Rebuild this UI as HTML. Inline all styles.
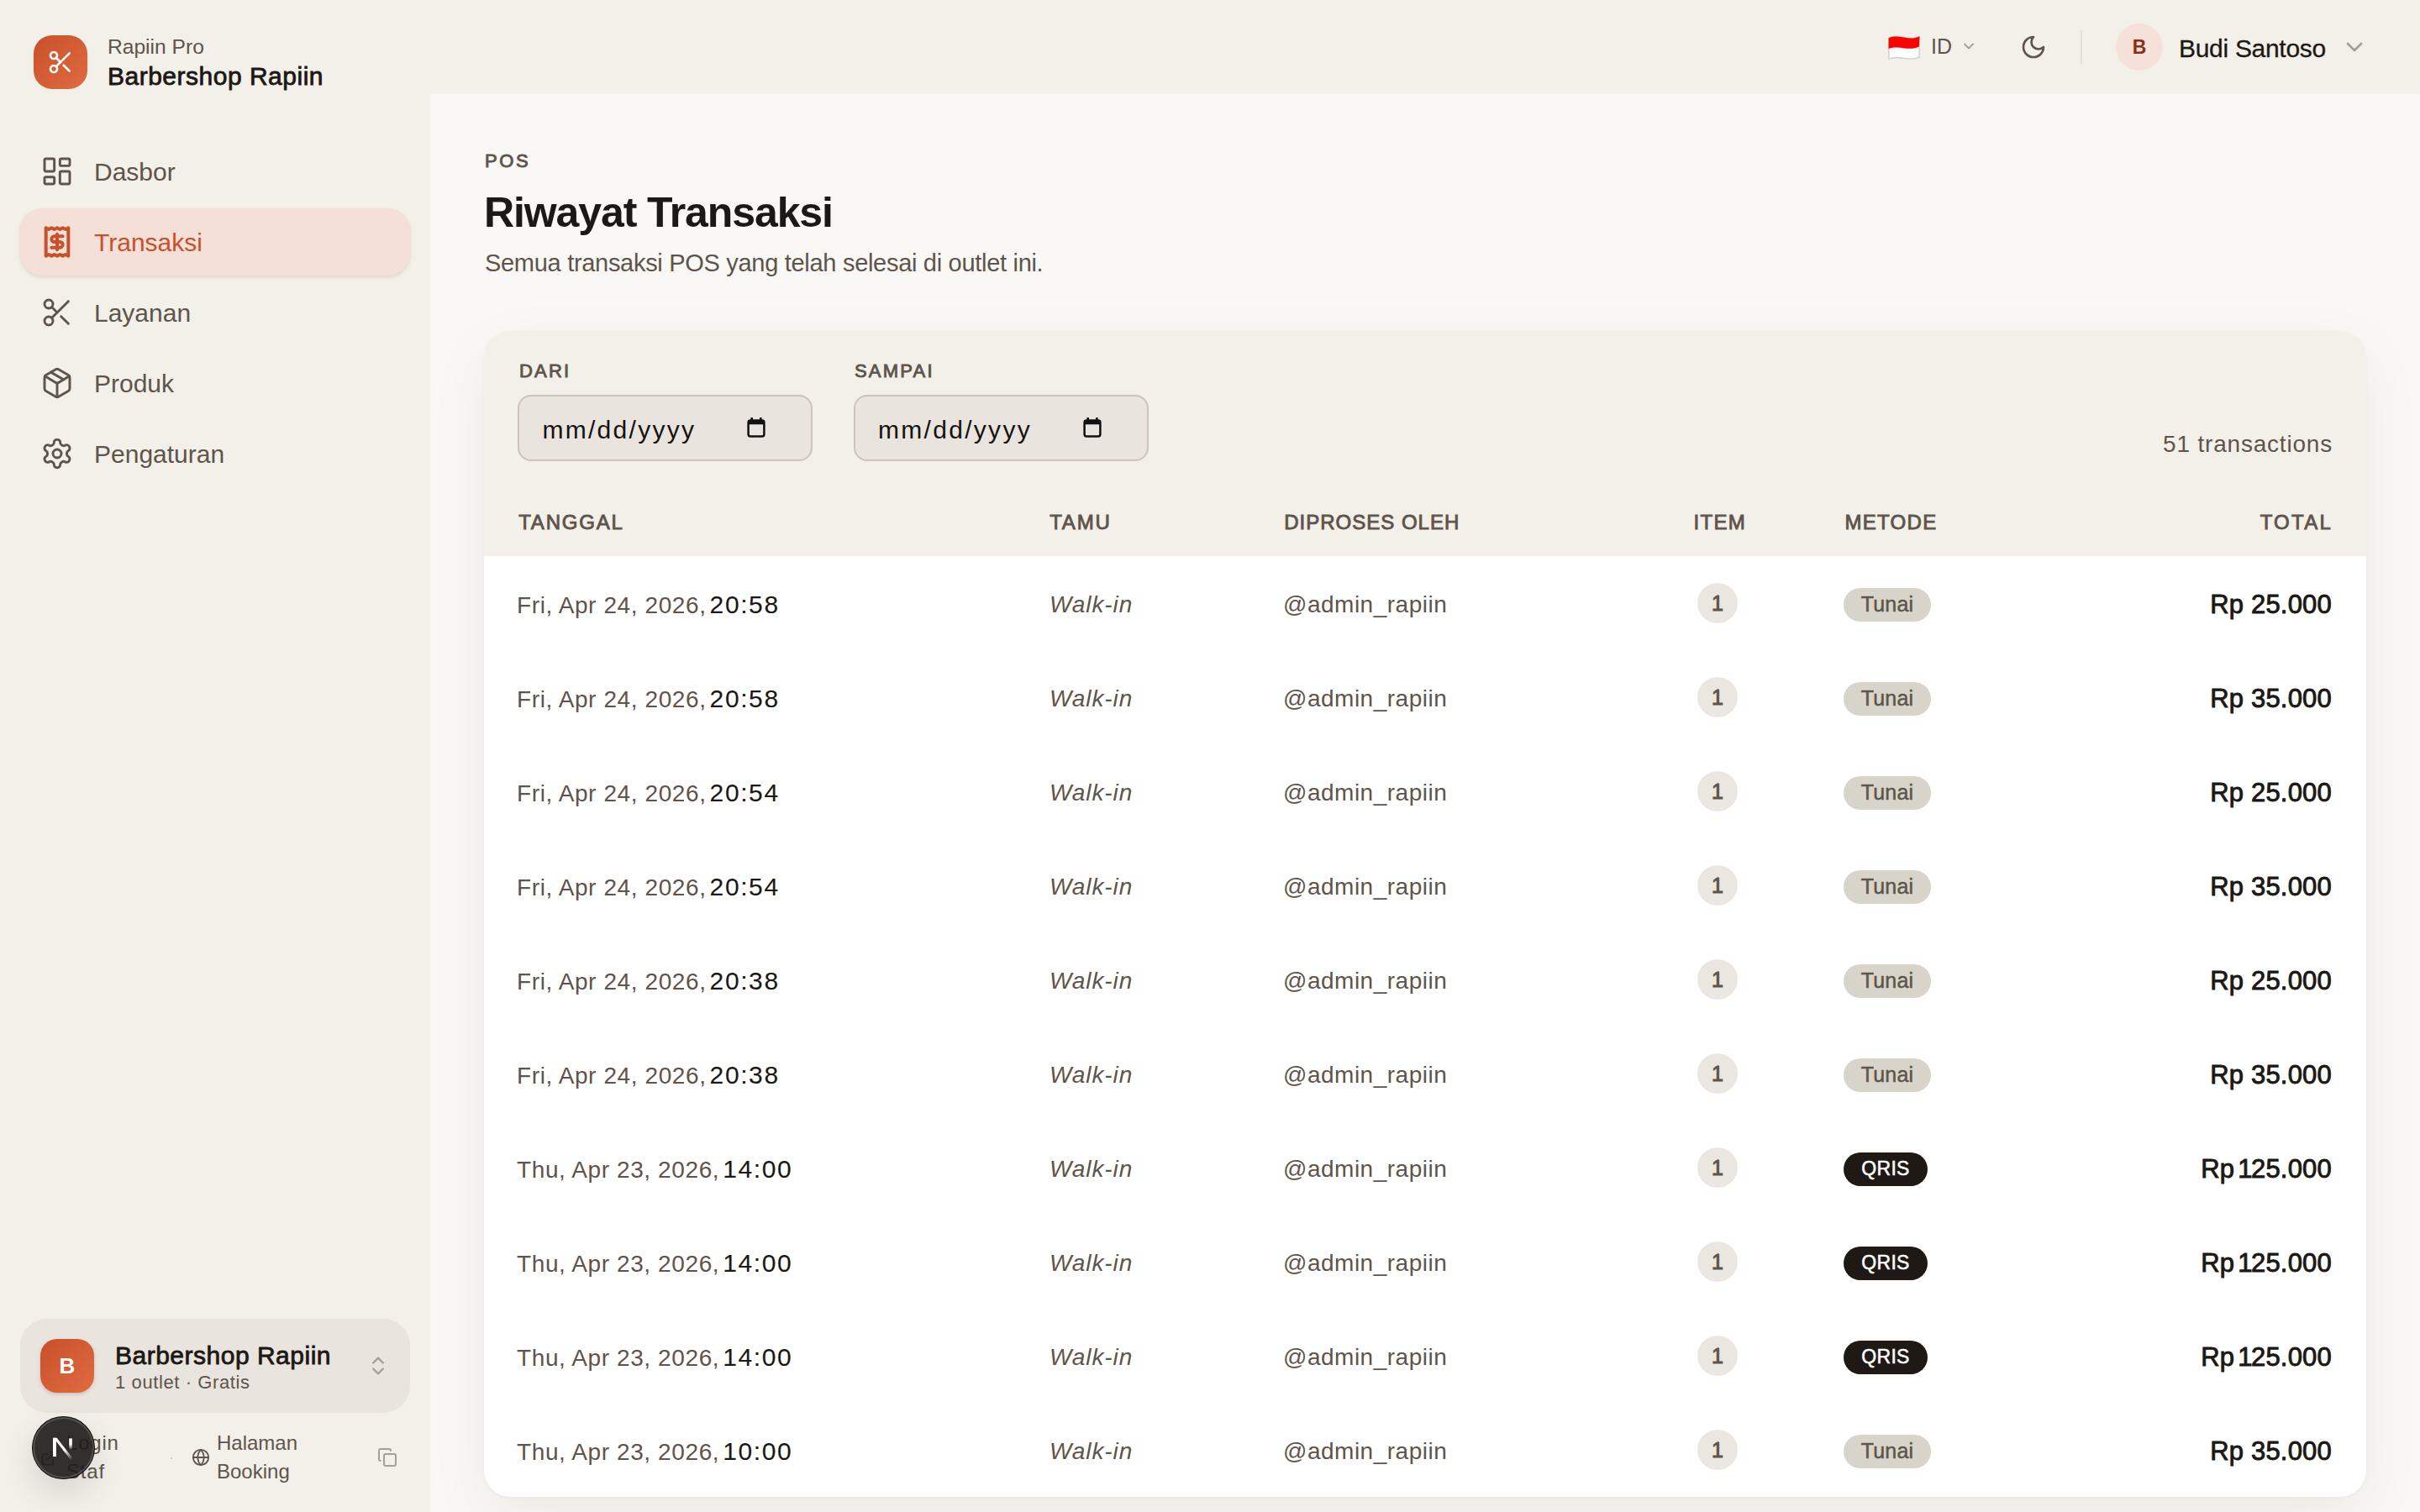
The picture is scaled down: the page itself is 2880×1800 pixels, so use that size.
<!DOCTYPE html>
<html><head><meta charset="utf-8">
<style>
*{box-sizing:border-box;margin:0;padding:0}
html,body{width:2880px;height:1800px;overflow:hidden;background:#f3f0ea}
body{font-family:"Liberation Sans",sans-serif;color:#1c1814}
#root{zoom:2;width:1440px;height:900px;position:relative;background:#f3f0ea;overflow:hidden}
.abs{position:absolute}
svg{display:block}
/* sidebar */
.logo{left:20px;top:21px;width:32px;height:32px;border-radius:11px;background:linear-gradient(135deg,#c8512b,#e06a40)}
.brand1{left:64px;top:21px;font-size:12.3px;color:#5e544b;white-space:nowrap}
.brand2{left:64px;top:36.8px;font-size:15px;letter-spacing:0.25px;font-weight:normal;color:#1c1814;white-space:nowrap;-webkit-text-stroke:0.4px #1c1814}
.nav{left:12px;width:232px;height:40px;border-radius:13px;color:#5e544b;font-size:15px}
.nav .ic{position:absolute;left:12px;top:10px;width:20px;height:20px}
.nav .tx{position:absolute;left:44px;top:12px;white-space:nowrap}
.nav.act{background:#f4e0d7;color:#c8512b;box-shadow:0 1px 2px rgba(90,60,40,.14)}
.main{left:256px;top:56px;width:1184px;height:844px;background:#f9f8f5;border-left:0.5px solid #fbfaf7;border-top:0.5px solid #fbfaf7}

/* topbar */
.flag{left:1123.5px;top:21.5px;width:19px;height:14px}
.lang{left:1149px;top:21.4px;font-size:12.5px;line-height:12.5px;color:#5e544b}
.chev1{left:1166.5px;top:22.5px;width:10px;height:10px}
.moon{left:1202px;top:20px;width:16px;height:16px}
.vdiv{left:1238px;top:18px;width:1px;height:20px;background:#e2ddd5}
.avatar{left:1259px;top:14px;width:28px;height:28px;border-radius:50%;background:#f5e1da;color:#8e2e12;font-weight:bold;font-size:11.5px;text-align:center;line-height:28px}
.uname{left:1296.5px;top:21.3px;font-size:15px;line-height:15px;color:#1c1814;letter-spacing:-0.15px;-webkit-text-stroke:0.15px #1c1814;white-space:nowrap}
.chev2{left:1393px;top:20px;width:16px;height:16px}
/* main header */
.eyebrow{left:288.5px;top:90.7px;font-size:11px;line-height:11px;font-weight:normal;letter-spacing:1.3px;color:#5e544b;-webkit-text-stroke:0.45px #5e544b}
.h1{left:288px;top:114px;font-size:25px;line-height:25px;font-weight:bold;color:#1c1814;letter-spacing:-0.55px;white-space:nowrap}
.sub{left:288.5px;top:148.8px;font-size:14.5px;line-height:15px;color:#5e544b;letter-spacing:-0.15px;white-space:nowrap}
/* card */
.card{left:288px;top:197px;width:1120px;height:694px;border-radius:16px;background:#f3f0ea;box-shadow:0 1px 2px rgba(80,60,40,.03),0 12px 36px -2px rgba(80,60,40,.08)}
.lbl{top:215.7px;font-size:11px;line-height:11px;font-weight:normal;letter-spacing:1.1px;color:#5e544b;-webkit-text-stroke:0.45px #5e544b}
.inp{top:235px;width:175.5px;height:39.5px;border-radius:8px;background:#e9e4de;border:1px solid #cdc3b8}
.inp .ph{position:absolute;left:13.5px;top:12.5px;font-size:15px;line-height:15px;color:#16120f;letter-spacing:1.15px;white-space:nowrap}
.inp svg{position:absolute;left:135.5px;top:12.5px}
.count{right:52px;top:257.7px;font-size:14px;line-height:14px;color:#5e544b;letter-spacing:0.4px;white-space:nowrap}
.th{top:304.8px;font-size:12px;line-height:12px;font-weight:normal;letter-spacing:0.9px;color:#5e544b;white-space:nowrap;-webkit-text-stroke:0.45px #5e544b}
.tbody{left:288px;top:331px;width:1120px;height:560px;background:#fff;border-radius:0 0 16px 16px}
.row{position:absolute;left:288px;width:1120px;height:56px}
.row span{position:absolute;white-space:nowrap}
.dt{left:19.5px;top:22.2px;font-size:14px;line-height:14px;color:#5e544b;letter-spacing:0.3px}
.row span.tm{position:static;margin-left:2px;font-size:15px;line-height:14px;color:#1c1814;letter-spacing:0.8px;-webkit-text-stroke:0.05px #1c1814}
.guest{left:336.5px;top:22.2px;font-size:14px;line-height:14px;font-style:italic;color:#5e544b;letter-spacing:0.45px}
.by{left:475.5px;top:22.2px;font-size:14px;line-height:14px;color:#5e544b;letter-spacing:0.25px}
.cnt{left:722px;top:16px;width:24px;height:24px;border-radius:50%;background:#ebe6e0;color:#5e544b;font-size:12.5px;font-weight:normal;line-height:24px;text-align:center;-webkit-text-stroke:0.5px #5e544b}
.badge{left:809px;top:19px;height:20px;border-radius:10px;font-size:12.5px;line-height:19px;text-align:center;letter-spacing:0.1px}
.tunai{width:52px;background:#d9d4cb;color:#5e544b;-webkit-text-stroke:0.25px #5e544b}
.qris{width:50px;background:#1f1915;color:#fff;font-size:11.5px!important;letter-spacing:0.15px!important;-webkit-text-stroke:0.25px #fff}
.tot{right:20.5px;top:21.2px;font-size:15.5px;line-height:15.5px;font-weight:normal;color:#1c1814;letter-spacing:0.1px;-webkit-text-stroke:0.45px #1c1814}
/* sidebar bottom */
.outlet{left:12px;top:785px;width:232px;height:56px;border-radius:16px;background:#e9e4de}
.obadge{left:24px;top:797px;width:32px;height:32px;border-radius:10px;background:linear-gradient(135deg,#c8512b,#e06a40);color:#fff;font-weight:bold;font-size:13px;line-height:32px;text-align:center;box-shadow:0 1px 2px rgba(120,50,20,.2)}
.oname{left:68.5px;top:799.3px;font-size:15px;line-height:15px;letter-spacing:0.25px;font-weight:normal;color:#1c1814;white-space:nowrap;-webkit-text-stroke:0.4px #1c1814}
.osub{left:68.5px;top:817.3px;font-size:11px;line-height:11px;color:#5e544b;letter-spacing:0.3px;white-space:nowrap}
.ochev{left:218px;top:806px;width:14px;height:14px}
.lnk{font-size:12px;line-height:16.7px;color:#5e544b;white-space:nowrap}
.nextbtn{left:19.2px;top:843.1px;width:37.2px;height:37.5px;border-radius:50%;background:rgba(28,27,26,.9);border:0.7px solid #0d0d0d;box-shadow:inset 0 0 0 1px rgba(120,118,115,.5),0 8px 20px rgba(0,0,0,.12)}
@media (max-width:2000px){html,body{width:1440px;height:900px}#root{zoom:1}}
.row span.n1{position:static;margin-left:-2.4px;margin-right:-0.9px}
</style></head><body><div id="root">

<!-- logo -->
<div class="abs logo">
<svg style="position:absolute;left:8px;top:8px" width="16" height="16" viewBox="0 0 24 24" fill="none" stroke="#fff" stroke-width="2" stroke-linecap="round" stroke-linejoin="round"><circle cx="6" cy="6" r="3"/><path d="M8.12 8.12 12 12"/><path d="M20 4 8.12 15.88"/><circle cx="6" cy="18" r="3"/><path d="M14.8 14.8 20 20"/></svg></div>
<div class="abs brand1">Rapiin Pro</div>
<div class="abs brand2">Barbershop Rapiin</div>

<div class="abs nav" style="top:82px"><svg class="ic" viewBox="0 0 24 24" fill="none" stroke="currentColor" stroke-width="1.75" stroke-linecap="round" stroke-linejoin="round"><rect width="7" height="9" x="3" y="3" rx="1"/><rect width="7" height="5" x="14" y="3" rx="1"/><rect width="7" height="9" x="14" y="12" rx="1"/><rect width="7" height="5" x="3" y="16" rx="1"/></svg><span class="tx">Dasbor</span></div>
<div class="abs nav act" style="top:124px"><svg class="ic" viewBox="0 0 24 24" fill="none" stroke="currentColor" stroke-width="2.4" stroke-linecap="round" stroke-linejoin="round"><path d="M4 2v20l2-1 2 1 2-1 2 1 2-1 2 1 2-1 2 1V2l-2 1-2-1-2 1-2-1-2 1-2-1-2 1Z"/><path d="M16 8h-6a2 2 0 1 0 0 4h4a2 2 0 1 1 0 4H8"/><path d="M12 17.5v-11"/></svg><span class="tx">Transaksi</span></div>
<div class="abs nav" style="top:166px"><svg class="ic" viewBox="0 0 24 24" fill="none" stroke="currentColor" stroke-width="1.75" stroke-linecap="round" stroke-linejoin="round"><circle cx="6" cy="6" r="3"/><path d="M8.12 8.12 12 12"/><path d="M20 4 8.12 15.88"/><circle cx="6" cy="18" r="3"/><path d="M14.8 14.8 20 20"/></svg><span class="tx">Layanan</span></div>
<div class="abs nav" style="top:208px"><svg class="ic" viewBox="0 0 24 24" fill="none" stroke="currentColor" stroke-width="1.75" stroke-linecap="round" stroke-linejoin="round"><path d="M11 21.73a2 2 0 0 0 2 0l7-4A2 2 0 0 0 21 16V8a2 2 0 0 0-1-1.73l-7-4a2 2 0 0 0-2 0l-7 4A2 2 0 0 0 3 8v8a2 2 0 0 0 1 1.73z"/><path d="M12 22V12"/><path d="m3.3 7 7.703 4.734a2 2 0 0 0 1.994 0L20.7 7"/><path d="m7.5 4.27 9 5.15"/></svg><span class="tx">Produk</span></div>
<div class="abs nav" style="top:250px"><svg class="ic" viewBox="0 0 24 24" fill="none" stroke="currentColor" stroke-width="1.75" stroke-linecap="round" stroke-linejoin="round"><path d="M12.22 2h-.44a2 2 0 0 0-2 2v.18a2 2 0 0 1-1 1.73l-.43.25a2 2 0 0 1-2 0l-.15-.08a2 2 0 0 0-2.73.73l-.22.38a2 2 0 0 0 .73 2.73l.15.1a2 2 0 0 1 1 1.72v.51a2 2 0 0 1-1 1.74l-.15.09a2 2 0 0 0-.73 2.73l.22.38a2 2 0 0 0 2.73.73l.15-.08a2 2 0 0 1 2 0l.43.25a2 2 0 0 1 1 1.73V20a2 2 0 0 0 2 2h.44a2 2 0 0 0 2-2v-.18a2 2 0 0 1 1-1.73l.43-.25a2 2 0 0 1 2 0l.15.08a2 2 0 0 0 2.73-.73l.22-.39a2 2 0 0 0-.73-2.73l-.15-.08a2 2 0 0 1-1-1.74v-.5a2 2 0 0 1 1-1.74l.15-.09a2 2 0 0 0 .73-2.73l-.22-.38a2 2 0 0 0-2.73-.73l-.15.08a2 2 0 0 1-2 0l-.43-.25a2 2 0 0 1-1-1.73V4a2 2 0 0 0-2-2z"/><circle cx="12" cy="12" r="3"/></svg><span class="tx">Pengaturan</span></div>

<div class="abs main"></div>

<!-- topbar -->
<svg class="abs flag" viewBox="0 0 19 14"><path d="M0.3 1.2 C2 0 6 0.1 9.5 0.8 C13 1.5 16 1.5 18.7 0.1 L18.5 12.4 C16 13.8 13 13.8 9.7 13.2 C6.5 12.6 3 12.6 0.5 13.6 Z" fill="#fff" stroke="#cfcfcf" stroke-width="0.7"/><path d="M0.3 1.2 C2 0 6 0.1 9.5 0.8 C13 1.5 16 1.5 18.7 0.1 L18.5 6.3 C16 7.6 13 7.6 9.7 7.2 C6.5 6.6 3 6.6 0.3 7.5 Z" fill="#ff0000"/></svg>
<div class="abs lang">ID</div>
<svg class="abs chev1" viewBox="0 0 24 24" fill="none" stroke="#a69d93" stroke-width="2.2" stroke-linecap="round" stroke-linejoin="round"><path d="m6 9 6 6 6-6"/></svg>
<svg class="abs moon" viewBox="0 0 24 24" fill="none" stroke="#5e544b" stroke-width="2" stroke-linecap="round" stroke-linejoin="round"><path d="M12 3a6 6 0 0 0 9 9 9 9 0 1 1-9-9Z"/></svg>
<div class="abs vdiv"></div>
<div class="abs avatar">B</div>
<div class="abs uname">Budi Santoso</div>
<svg class="abs chev2" viewBox="0 0 24 24" fill="none" stroke="#a69d93" stroke-width="2" stroke-linecap="round" stroke-linejoin="round"><path d="m6 9 6 6 6-6"/></svg>

<div class="abs eyebrow">POS</div>
<div class="abs h1">Riwayat Transaksi</div>
<div class="abs sub">Semua transaksi POS yang telah selesai di outlet ini.</div>

<div class="abs card"></div>
<div class="abs lbl" style="left:309px">DARI</div>
<div class="abs lbl" style="left:508.5px">SAMPAI</div>
<div class="abs inp" style="left:308.2px"><span class="ph">mm/dd/yyyy</span><svg width="11" height="12" viewBox="0 0 11 12"><rect x="0.8" y="1.8" width="9.4" height="9.4" rx="1.2" fill="none" stroke="#111" stroke-width="1.25"/><rect x="0.5" y="1.5" width="10" height="2.6" rx="0.8" fill="#111"/><rect x="2.2" y="0" width="1.3" height="2" fill="#111"/><rect x="7.5" y="0" width="1.3" height="2" fill="#111"/></svg></div>
<div class="abs inp" style="left:508px"><span class="ph">mm/dd/yyyy</span><svg width="11" height="12" viewBox="0 0 11 12"><rect x="0.8" y="1.8" width="9.4" height="9.4" rx="1.2" fill="none" stroke="#111" stroke-width="1.25"/><rect x="0.5" y="1.5" width="10" height="2.6" rx="0.8" fill="#111"/><rect x="2.2" y="0" width="1.3" height="2" fill="#111"/><rect x="7.5" y="0" width="1.3" height="2" fill="#111"/></svg></div>
<div class="abs count">51 transactions</div>
<div class="abs th" style="left:308.6px">TANGGAL</div>
<div class="abs th" style="left:624.6px">TAMU</div>
<div class="abs th" style="left:764.1px;letter-spacing:0.5px">DIPROSES OLEH</div>
<div class="abs th" style="left:1007.8px;letter-spacing:0.63px">ITEM</div>
<div class="abs th" style="left:1097.7px;letter-spacing:0.66px">METODE</div>
<div class="abs th" style="right:52px;letter-spacing:1.12px">TOTAL</div>
<div class="abs tbody"></div>
<div class="row" style="top:331px"><span class="dt">Fri, Apr 24, 2026,<span class="tm">20:58</span></span><span class="guest">Walk-in</span><span class="by">@admin_rapiin</span><span class="cnt">1</span><span class="badge tunai">Tunai</span><span class="tot">Rp 25.000</span></div>
<div class="row" style="top:387px"><span class="dt">Fri, Apr 24, 2026,<span class="tm">20:58</span></span><span class="guest">Walk-in</span><span class="by">@admin_rapiin</span><span class="cnt">1</span><span class="badge tunai">Tunai</span><span class="tot">Rp 35.000</span></div>
<div class="row" style="top:443px"><span class="dt">Fri, Apr 24, 2026,<span class="tm">20:54</span></span><span class="guest">Walk-in</span><span class="by">@admin_rapiin</span><span class="cnt">1</span><span class="badge tunai">Tunai</span><span class="tot">Rp 25.000</span></div>
<div class="row" style="top:499px"><span class="dt">Fri, Apr 24, 2026,<span class="tm">20:54</span></span><span class="guest">Walk-in</span><span class="by">@admin_rapiin</span><span class="cnt">1</span><span class="badge tunai">Tunai</span><span class="tot">Rp 35.000</span></div>
<div class="row" style="top:555px"><span class="dt">Fri, Apr 24, 2026,<span class="tm">20:38</span></span><span class="guest">Walk-in</span><span class="by">@admin_rapiin</span><span class="cnt">1</span><span class="badge tunai">Tunai</span><span class="tot">Rp 25.000</span></div>
<div class="row" style="top:611px"><span class="dt">Fri, Apr 24, 2026,<span class="tm">20:38</span></span><span class="guest">Walk-in</span><span class="by">@admin_rapiin</span><span class="cnt">1</span><span class="badge tunai">Tunai</span><span class="tot">Rp 35.000</span></div>
<div class="row" style="top:667px"><span class="dt">Thu, Apr 23, 2026,<span class="tm">14:00</span></span><span class="guest">Walk-in</span><span class="by">@admin_rapiin</span><span class="cnt">1</span><span class="badge qris">QRIS</span><span class="tot">Rp <span class="n1">1</span>25.000</span></div>
<div class="row" style="top:723px"><span class="dt">Thu, Apr 23, 2026,<span class="tm">14:00</span></span><span class="guest">Walk-in</span><span class="by">@admin_rapiin</span><span class="cnt">1</span><span class="badge qris">QRIS</span><span class="tot">Rp <span class="n1">1</span>25.000</span></div>
<div class="row" style="top:779px"><span class="dt">Thu, Apr 23, 2026,<span class="tm">14:00</span></span><span class="guest">Walk-in</span><span class="by">@admin_rapiin</span><span class="cnt">1</span><span class="badge qris">QRIS</span><span class="tot">Rp <span class="n1">1</span>25.000</span></div>
<div class="row" style="top:835px"><span class="dt">Thu, Apr 23, 2026,<span class="tm">10:00</span></span><span class="guest">Walk-in</span><span class="by">@admin_rapiin</span><span class="cnt">1</span><span class="badge tunai">Tunai</span><span class="tot">Rp 35.000</span></div>

<!-- sidebar bottom -->
<div class="abs outlet"></div>
<div class="abs obadge">B</div>
<div class="abs oname">Barbershop Rapiin</div>
<div class="abs osub">1 outlet · Gratis</div>
<svg class="abs ochev" viewBox="0 0 24 24" fill="none" stroke="#a89f94" stroke-width="2" stroke-linecap="round" stroke-linejoin="round"><path d="m7 15 5 5 5-5"/><path d="m7 9 5-5 5 5"/></svg>
<svg class="abs" style="left:23.8px;top:862.8px" width="10" height="10" viewBox="0 0 24 24" fill="none" stroke="#5e544b" stroke-width="2" stroke-linecap="round" stroke-linejoin="round"><path d="M15 3h6v6"/><path d="M10 14 21 3"/><path d="M18 13v6a2 2 0 0 1-2 2H5a2 2 0 0 1-2-2V8a2 2 0 0 1 2-2h6"/></svg>
<div class="abs lnk" style="left:39.5px;top:850.7px;letter-spacing:0.4px">Login<br>Staf</div>
<div class="abs" style="left:101.5px;top:867.3px;width:1px;height:1px;background:#cfc8bf"></div>
<svg class="abs" style="left:114px;top:862px" width="11" height="11" viewBox="0 0 24 24" fill="none" stroke="#5e544b" stroke-width="2" stroke-linecap="round" stroke-linejoin="round"><circle cx="12" cy="12" r="10"/><path d="M12 2a14.5 14.5 0 0 0 0 20 14.5 14.5 0 0 0 0-20"/><path d="M2 12h20"/></svg>
<div class="abs lnk" style="left:129px;top:850.7px">Halaman<br>Booking</div>
<svg class="abs" style="left:224.5px;top:861.5px" width="12" height="12" viewBox="0 0 24 24" fill="none" stroke="#a89f94" stroke-width="2" stroke-linecap="round" stroke-linejoin="round"><rect width="14" height="14" x="8" y="8" rx="2" ry="2"/><path d="M4 16c-1.1 0-2-.9-2-2V4c0-1.1.9-2 2-2h10c1.1 0 2 .9 2 2"/></svg>
<div class="abs nextbtn"><svg style="position:absolute;left:-1px;top:-1px" width="37" height="37" viewBox="0 0 37 37"><defs><linearGradient id="ngd" gradientUnits="userSpaceOnUse" x1="14" y1="13.6" x2="24.4" y2="26.4"><stop offset="0.55" stop-color="#fff"/><stop offset="1" stop-color="#fff" stop-opacity="0"/></linearGradient><linearGradient id="ngs" gradientUnits="userSpaceOnUse" x1="0" y1="13.7" x2="0" y2="20.6"><stop offset="0.5" stop-color="#fff"/><stop offset="1" stop-color="#fff" stop-opacity="0"/></linearGradient></defs><rect x="13" y="13.4" width="1.95" height="11.1" fill="#fff"/><path d="M13.4 13.4 H15.3 L24.9 25.6 L23.6 26.6 Z" fill="url(#ngd)"/><rect x="22.6" y="13.7" width="1.8" height="6.9" fill="url(#ngs)"/></svg></div>


</div></body></html>
